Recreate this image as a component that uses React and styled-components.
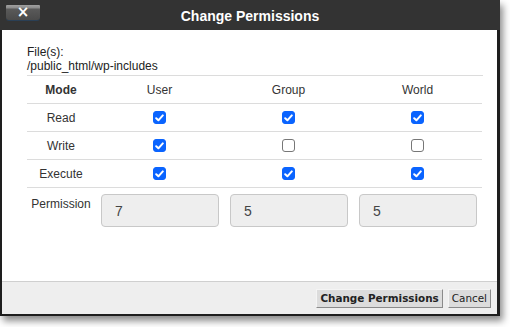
import React from "react";
import styled, { createGlobalStyle } from "styled-components";

const GlobalStyle = createGlobalStyle`
  html, body {
    margin: 0;
    padding: 0;
    background: #fff;
  }
`;

const modes = [
  { name: "Read", user: true, group: true, world: true },
  { name: "Write", user: true, group: false, world: false },
  { name: "Execute", user: true, group: true, world: true },
];

const Check = ({ checked }) => (
  <CheckBox checked={checked}>
    {checked && (
      <svg width="9" height="8" viewBox="0 0 9 8">
        <path
          d="M1.2 4.2 L3.4 6.3 L7.8 1.4"
          fill="none"
          stroke="#fff"
          strokeWidth="2"
          strokeLinecap="round"
          strokeLinejoin="round"
        />
      </svg>
    )}
  </CheckBox>
);

const App = () => {
  return (
    <>
      <GlobalStyle />
      <Page>
        <Dialog>
          <TitleBar>
            <CloseButton>×</CloseButton>
            <Title>Change Permissions</Title>
          </TitleBar>

          <Body>
            <FileInfo>
              File(s):
              <br />
              /public_html/wp-includes
            </FileInfo>

            <Grid>
              <HeadCell bold>Mode</HeadCell>
              <HeadCell>User</HeadCell>
              <HeadCell>Group</HeadCell>
              <HeadCell>World</HeadCell>
              {modes.map((m) => (
                <React.Fragment key={m.name}>
                  <Cell>{m.name}</Cell>
                  <Cell>
                    <Check checked={m.user} />
                  </Cell>
                  <Cell>
                    <Check checked={m.group} />
                  </Cell>
                  <Cell>
                    <Check checked={m.world} />
                  </Cell>
                </React.Fragment>
              ))}
            </Grid>

            <PermRow>
              <PermLabel>Permission</PermLabel>
              <PermInputs>
                <PermBox>7</PermBox>
                <PermBox>5</PermBox>
                <PermBox>5</PermBox>
              </PermInputs>
            </PermRow>
          </Body>

          <Footer>
            <Button bold>Change Permissions</Button>
            <Button>Cancel</Button>
          </Footer>
        </Dialog>
      </Page>
    </>
  );
};

export default App;

const Page = styled.div`
  width: 510px;
  height: 327px;
  overflow: hidden;
  font-family: "Liberation Sans", Arial, sans-serif;
`;

const Dialog = styled.div`
  width: 500px;
  box-sizing: border-box;
  border: 2px solid #1e1e1e;
  border-top: none;
  border-right-width: 3px;
  background: #fff;
  box-shadow: 3px 5px 7px rgba(0, 0, 0, 0.45);
`;

const TitleBar = styled.div`
  height: 30px;
  margin: 0 -3px 0 -2px;
  background: #333;
  display: flex;
  align-items: center;
  justify-content: center;
  position: relative;
`;

const CloseButton = styled.div`
  position: absolute;
  left: 6px;
  top: 5px;
  width: 34px;
  height: 15px;
  border-radius: 1px 1px 3px 3px;
  background: linear-gradient(#a0a0a0 0, #8a8a8a 3px, #5a5a5a 4px, #4a4a4a 100%);
  box-shadow: 0 1px 0 #2a3f55;
  color: #fff;
  font: bold 15px/15px "DejaVu Sans", sans-serif;
  text-align: center;
`;

const Title = styled.div`
  color: #fff;
  font: bold 14px "Liberation Sans", Arial, sans-serif;
  margin-top: 2px;
`;

const Body = styled.div`
  height: 251px;
  padding: 15px 15px 0 25px;
  box-sizing: border-box;
`;

const FileInfo = styled.div`
  font-size: 12px;
  line-height: 14px;
  color: #222;
  margin-bottom: 2px;
`;

const Grid = styled.div`
  display: grid;
  grid-template-columns: 68px repeat(3, 129px);
  width: 456px;
  border-top: 1px solid #dcdcdc;
`;

const Cell = styled.div`
  height: 27px;
  border-bottom: 1px solid #dcdcdc;
  display: flex;
  align-items: center;
  justify-content: center;
  font-size: 12px;
  color: #333;
`;

const HeadCell = styled(Cell)`
  font-weight: ${(p) => (p.bold ? "bold" : "normal")};
  padding-top: 1px;
  box-sizing: border-box;
  height: 28px;
`;

const CheckBox = styled.span`
  width: 13px;
  height: 13px;
  box-sizing: border-box;
  border-radius: 3px;
  display: flex;
  align-items: center;
  justify-content: center;
  background: ${(p) => (p.checked ? "#0a64ff" : "#fff")};
  border: 1px solid ${(p) => (p.checked ? "#0a64ff" : "#777")};
`;

const PermRow = styled.div`
  display: flex;
  margin-top: 6px;
`;

const PermLabel = styled.div`
  width: 68px;
  text-align: center;
  font-size: 12px;
  color: #333;
  padding-top: 3px;
`;

const PermInputs = styled.div`
  display: flex;
  gap: 11px;
  margin-left: 6px;
`;

const PermBox = styled.div`
  width: 118px;
  height: 33px;
  box-sizing: border-box;
  border: 1px solid #c8c8c8;
  border-radius: 4px;
  background: #eeeeee;
  display: flex;
  align-items: center;
  padding-left: 13px;
  font-size: 14px;
  color: #444;
`;

const Footer = styled.div`
  height: 32px;
  border-top: 1px solid #cfcfcf;
  background: #eeeeee;
  display: flex;
  align-items: center;
  justify-content: flex-end;
  gap: 5px;
  padding-right: 6px;
`;

const Button = styled.div`
  height: 19px;
  box-sizing: border-box;
  padding: 0 3px;
  display: flex;
  align-items: center;
  background: #dcdcdc;
  border: 1px solid;
  border-color: #f4f4f4 #8a8a8a #8a8a8a #f4f4f4;
  font-family: "DejaVu Sans", Verdana, sans-serif;
  font-size: 10.4px;
  font-weight: ${(p) => (p.bold ? "bold" : "normal")};
  color: #222;
`;
